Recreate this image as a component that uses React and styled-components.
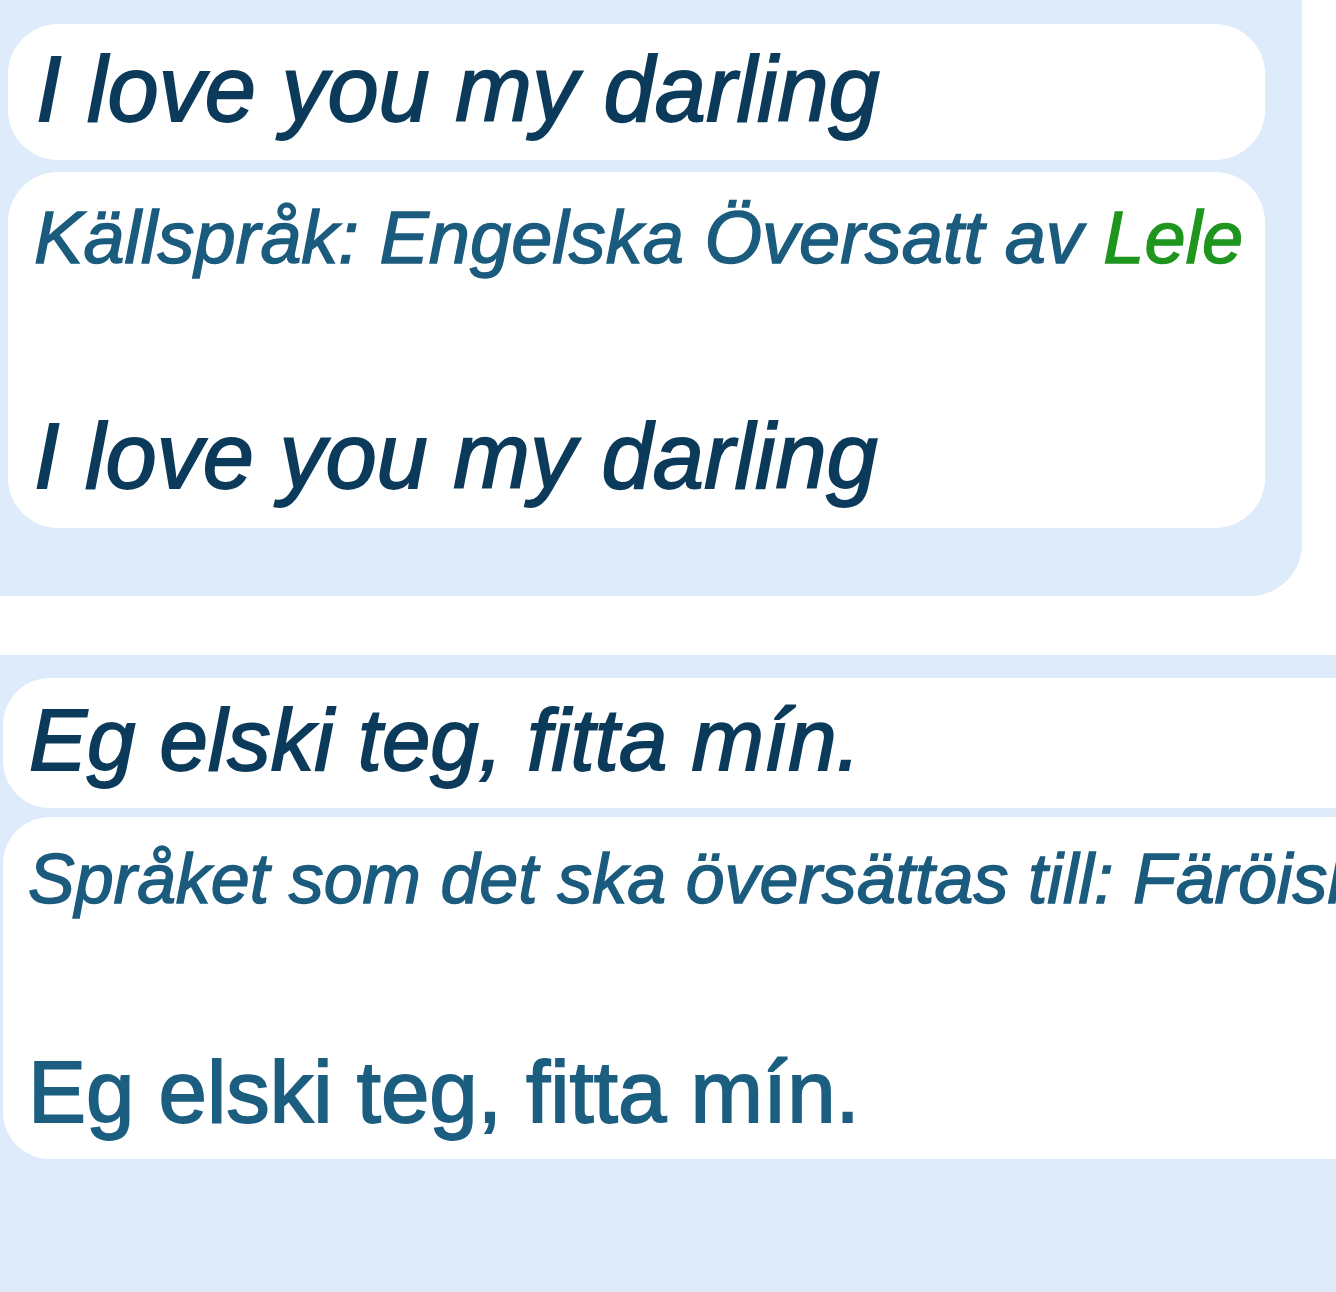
import styled, { createGlobalStyle } from 'styled-components';

const GlobalStyle = createGlobalStyle`
  html, body {
    margin: 0;
    padding: 0;
    background: #ffffff;
  }
  body {
    font-family: "Liberation Sans", Arial, sans-serif;
  }
`

const Page = styled.div`
  width: 1336px;
  height: 1292px;
  overflow: hidden;
  display: flex;
  flex-direction: column;
  background: #ffffff;
`

const SourcePanel = styled.section`
  width: 1302px;
  box-sizing: border-box;
  padding: 24px 37px 68px 8px;
  background: #ddebfb;
  border-bottom-right-radius: 52px;
  display: flex;
  flex-direction: column;
  gap: 12px;
`

const TargetPanel = styled.section`
  flex: 1;
  margin-top: 59px;
  margin-right: -90px;
  padding: 23px 0 0 3px;
  background: #ddebfb;
  display: flex;
  flex-direction: column;
  gap: 9px;
`

const Bubble = styled.div`
  background: #ffffff;
  border-radius: ${p => p.$radius}px;
  padding: ${p => p.$pad};
`

const Heading = styled.div`
  font-size: ${p => p.$size}px;
  font-style: italic;
  line-height: normal;
  color: #0b3a5a;
  white-space: nowrap;
  -webkit-text-stroke: 1.8px #0b3a5a;
`

const Meta = styled.div`
  font-size: ${p => p.$size}px;
  font-style: italic;
  line-height: normal;
  color: #1a5b7e;
  white-space: nowrap;
  margin-bottom: ${p => p.$gap}px;
  -webkit-text-stroke: 1.4px currentColor;
`

const Translator = styled.span`
  color: #1e961e;
`

const Translation = styled.div`
  font-size: ${p => p.$size}px;
  font-style: ${p => (p.$italic ? 'italic' : 'normal')};
  line-height: normal;
  color: ${p => (p.$italic ? '#0b3a5a' : '#1b5e80')};
  white-space: nowrap;
  -webkit-text-stroke: 1.8px currentColor;
`

export default function App() {
  return (
    <>
      <GlobalStyle />
      <Page>
        <SourcePanel>
          <Bubble $radius={50} $pad="13px 20px 18px 28px">
            <Heading $size={92}>I love you my darling</Heading>
          </Bubble>
          <Bubble $radius={50} $pad="23px 20px 19px 26px">
            <Meta $size={74} $gap={124}>
              Källspråk: Engelska Översatt av <Translator>Lele</Translator>
            </Meta>
            <Translation $size={92} $italic>I love you my darling</Translation>
          </Bubble>
        </SourcePanel>
        <TargetPanel>
          <Bubble $radius={47} $pad="12px 20px 18px 26px">
            <Heading $size={87}>Eg elski teg, fitta mín.</Heading>
          </Bubble>
          <Bubble $radius={47} $pad="22px 20px 17px 25px">
            <Meta $size={70} $gap={123}>
              Språket som det ska översättas till: Färöiska
            </Meta>
            <Translation $size={87}>Eg elski teg, fitta mín.</Translation>
          </Bubble>
        </TargetPanel>
      </Page>
    </>
  );
}
